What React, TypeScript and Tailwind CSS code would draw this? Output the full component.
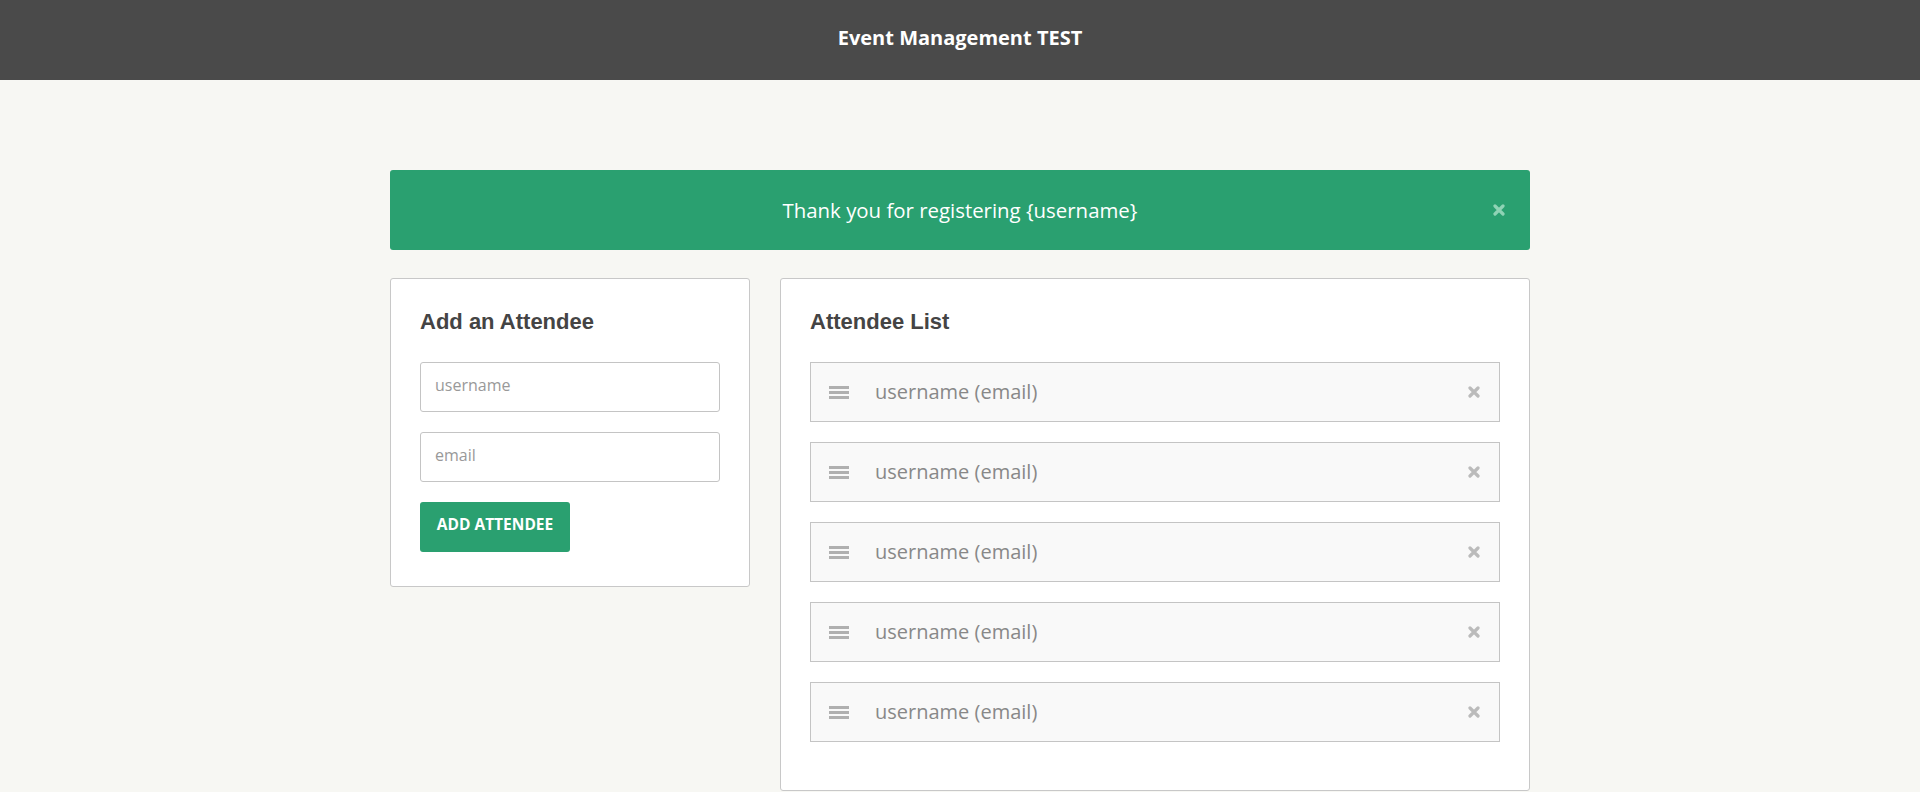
import React from "react";

const XIcon = ({ className }: { className?: string }) => (
  <svg viewBox="0 0 12 12" className={className} aria-hidden="true">
    <path d="M2 2 L10 10 M10 2 L2 10" stroke="currentColor" strokeWidth="3.2" strokeLinecap="round" />
  </svg>
);

const Handle = () => (
  <div className="flex w-[20px] flex-col gap-[2px]">
    <div className="h-[3px] bg-[#b0b0b0]" />
    <div className="h-[3px] bg-[#b0b0b0]" />
    <div className="h-[3px] bg-[#b0b0b0]" />
  </div>
);

export default function App() {
  const items = [0, 1, 2, 3, 4];
  return (
    <div className="min-h-[792px] bg-[#f7f7f3] font-['Open_Sans',sans-serif]">
      <header className="flex h-[80px] items-center justify-center bg-[#4a4a4a] pb-[4px]">
        <h1 className="text-[20px] font-bold text-white">Event Management TEST</h1>
      </header>
      <main className="mx-auto w-[1140px] pt-[90px]">
        <div className="relative flex h-[80px] items-center justify-center rounded-[3px] bg-[#2aa070]">
          <span className="text-[20.4px] text-white">Thank you for registering {"{username}"}</span>
          <XIcon className="absolute right-[25px] top-[34px] h-[12px] w-[12px] text-[#8fd3b5]" />
        </div>
        <div className="mt-[28px] flex items-start gap-[30px]">
          <section className="w-[360px] rounded-[3px] border border-[#c8c8c8] bg-white px-[29px] pb-[34px] pt-[30px]">
            <h2 className="mb-[27px] font-['Liberation_Sans',Arial,sans-serif] text-[22px] font-bold leading-[26px] text-[#444444]">
              Add an Attendee
            </h2>
            <div className="flex flex-col gap-[20px]">
              <input
                placeholder="username"
                className="h-[50px] w-[300px] rounded-[3px] border border-[#c4c4c4] bg-white px-[14px] pb-[4px] text-[16px] text-[#444] placeholder:text-[#999999] outline-none"
              />
              <input
                placeholder="email"
                className="h-[50px] w-[300px] rounded-[3px] border border-[#c4c4c4] bg-white px-[14px] pb-[4px] text-[16px] text-[#444] placeholder:text-[#999999] outline-none"
              />
              <button className="h-[50px] w-[150px] rounded-[3px] bg-[#2aa070] pb-[4px] text-[15.5px] font-bold uppercase text-white">
                Add Attendee
              </button>
            </div>
          </section>
          <section className="w-[750px] rounded-[3px] border border-[#c8c8c8] bg-white px-[29px] pb-[48px] pt-[30px]">
            <h2 className="mb-[27px] font-['Liberation_Sans',Arial,sans-serif] text-[22px] font-bold leading-[26px] text-[#444444]">
              Attendee List
            </h2>
            <ul className="flex flex-col gap-[20px]">
              {items.map((i) => (
                <li
                  key={i}
                  className="flex h-[60px] items-center border border-[#c4c4c4] bg-[#f9f9f9] pl-[18px] pr-[19px]"
                >
                  <Handle />
                  <span className="ml-[26px] flex-1 text-[20px] text-[#888888]">username (email)</span>
                  <XIcon className="h-[12px] w-[12px] text-[#bbbbbb]" />
                </li>
              ))}
            </ul>
          </section>
        </div>
      </main>
    </div>
  );
}
